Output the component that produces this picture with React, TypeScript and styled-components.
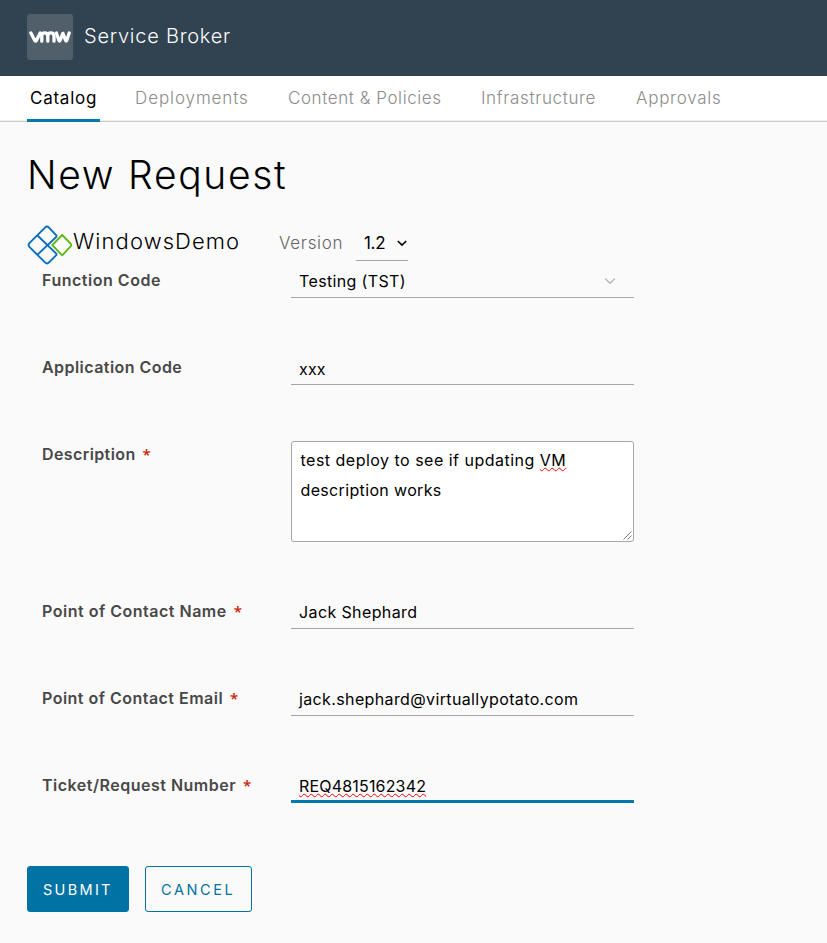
import React from 'react';
import styled, { createGlobalStyle, css } from 'styled-components';

const GlobalStyle = createGlobalStyle`
  *, *::before, *::after { box-sizing: border-box; }
  body {
    margin: 0;
    background: #fafafa;
    color: #000;
    font-family: Inter, "Liberation Sans", sans-serif;
    font-size: 16px;
  }
`;

const Page = styled.div`
  display: flex;
  flex-direction: column;
  min-height: 943px;
  white-space: nowrap;
`;

const Header = styled.header`
  display: flex;
  align-items: center;
  gap: 11px;
  height: 76px;
  padding: 0 27px 2px;
  background: #314351;
`;

const LogoBox = styled.div`
  display: flex;
  align-items: center;
  justify-content: center;
  width: 46px;
  height: 46px;
  border-radius: 3px;
  background: #515f6b;
`;

const ProductName = styled.span`
  padding-bottom: 2px;
  color: #fafafa;
  font-size: 20px;
  font-weight: 300;
  line-height: 24px;
  letter-spacing: 0.75px;
`;

const Nav = styled.nav`
  display: flex;
  height: 46px;
  padding-left: 27px;
  background: #fff;
  box-shadow: inset 0 -1px 0 #ccc, inset 0 -2px 0 #eee;
`;

const Tab = styled.a<{ $active?: boolean; $width: number; $track: number }>`
  width: ${(p) => p.$width}px;
  height: 46px;
  margin-right: 32px;
  padding-left: 3px;
  font-size: 17px;
  line-height: 45px;
  font-weight: ${(p) => (p.$active ? 370 : 340)};
  letter-spacing: ${(p) => p.$track}px;
  color: ${(p) => (p.$active ? '#000' : '#8c8c8c')};
  ${(p) => p.$active && css`box-shadow: inset 0 -3px 0 #0079ad;`}
`;

const Main = styled.main`
  padding: 28px 27px 0;
`;

const Title = styled.h1`
  margin: 0;
  padding-top: 1px;
  padding-bottom: 1px;
  font-size: 39px;
  font-weight: 270;
  line-height: 48px;
  letter-spacing: 1.68px;
`;

const ItemBar = styled.div`
  display: flex;
  align-items: flex-start;
  height: 67px;
  padding-top: 23px;
`;

const ItemIcon = styled.svg`
  flex: none;
  width: 46px;
  height: 42px;
  margin-top: 1px;
`;

const ItemName = styled.span`
  width: 206px;
  font-size: 22px;
  font-weight: 300;
  line-height: 37px;
  letter-spacing: 1.08px;
`;

const VersionLabel = styled.span`
  width: 77px;
  color: #666;
  font-size: 17px;
  font-weight: 330;
  line-height: 40px;
  letter-spacing: 0.7px;
`;

const VersionSelect = styled.div`
  display: flex;
  align-items: center;
  justify-content: space-between;
  width: 52px;
  height: 38px;
  padding: 3px 0 0 8px;
  border-bottom: 1px solid #a6a6a6;
  font-size: 17px;
  letter-spacing: -0.3px;
`;

const Form = styled.form`
  padding-left: 15px;
`;

const Field = styled.div<{ $tall?: boolean }>`
  display: grid;
  grid-template-columns: 249px 343px;
  align-items: start;
  height: ${(p) => (p.$tall ? 157 : 87)}px;
`;

const Label = styled.label<{ $track: number }>`
  display: flex;
  gap: 7px;
  color: #484848;
  font-weight: 600;
  line-height: 27px;
  letter-spacing: ${(p) => p.$track}px;
`;

const Required = styled.span`
  height: 27px;
  color: #c92100;
  font-family: "Open Sans", sans-serif;
  font-weight: 600;
  font-size: 15px;
  line-height: 26px;
`;

const Control = styled.div<{ $track: number; $focused?: boolean; $low?: boolean }>`
  display: flex;
  justify-content: space-between;
  align-items: center;
  height: 31px;
  padding: 0 17px 0 8px;
  border-bottom: ${(p) => (p.$focused ? '3px solid #0079ad' : '1px solid #a6a6a6')};
  line-height: ${(p) => (p.$low ? 30 : 28)}px;
  padding-bottom: ${(p) => (p.$low || p.$focused ? 0 : 2)}px;
  letter-spacing: ${(p) => p.$track}px;
`;

const TextArea = styled.div`
  display: flex;
  justify-content: space-between;
  align-items: flex-end;
  height: 101px;
  padding: 0 1px 1px 8px;
  border: 1px solid #a6a6a6;
  border-radius: 3px;
  background: #fff;
`;

const TextLines = styled.div`
  align-self: flex-start;
  padding-top: 3px;
`;

const TextLine = styled.div<{ $track: number }>`
  height: 30px;
  padding-left: 0.5px;
  line-height: 31px;
  letter-spacing: ${(p) => p.$track}px;
`;

const Misspelled = styled.span`
  text-decoration: underline wavy #f00 1.3px;
  text-decoration-skip-ink: none;
  text-underline-offset: 0.5px;
`;

const Actions = styled.div`
  display: flex;
  gap: 16px;
  padding-top: 7px;
`;

const Button = styled.button<{ $primary?: boolean }>`
  width: ${(p) => (p.$primary ? 102 : 107)}px;
  height: 46px;
  padding: 1px 0 0 15px;
  border: 1px solid #0072a3;
  border-radius: 3px;
  background: ${(p) => (p.$primary ? '#0072a3' : 'transparent')};
  color: ${(p) => (p.$primary ? '#fff' : '#0072a3')};
  font-family: inherit;
  font-size: 14.5px;
  letter-spacing: ${(p) => (p.$primary ? 2.3 : 2.6)}px;
  text-align: left;
`;

const VmwLogo = () => (
  <svg width="42" height="14" viewBox="0 0 42 14" fill="none" stroke="#fff" strokeWidth="3.3" strokeLinecap="round" strokeLinejoin="round">
    <path d="M1.9 3 L5.8 10.6 Q6.6 11.8 7.4 10.6 L11.2 3" />
    <path d="M12.8 11.2 V6 Q12.8 2.8 15.6 2.8 Q18.8 2.8 18.8 6 V11.2 M18.8 6 Q18.8 2.8 21.8 2.8 Q25 2.8 25 6 V11.2" />
    <path d="M27.4 3 L30 10.6 Q30.5 11.6 31 10.6 L33.9 3.4 L36.7 10.6 Q37.2 11.6 37.7 10.6 L40.2 3" />
  </svg>
);

const BlueprintIcon = () => (
  <ItemIcon viewBox="0 0 46 42" fill="none" strokeWidth="1.9" strokeLinejoin="round">
    <g stroke="#0a6ebd">
      <path d="M30 12.2 L22 3.6 Q20 1.4 18 3.6 L2.4 19.1 Q0.8 21 2.4 22.9 L18 38.4 Q20 40.6 22 38.4 L30 30.4" />
      <path d="M10.5 11.5 L30 30.4" />
      <path d="M30 12.2 L10.5 30.6" />
    </g>
    <path stroke="#60b515" d="M35.2 11 L43.6 19.6 Q44.8 21 43.6 22.4 L35.2 31.3 L25.3 21.2 Z" />
  </ItemIcon>
);

const Chevron = ({ color, wide }: { color: string; wide?: boolean }) => (
  <svg width={wide ? 14 : 12} height="8" viewBox={wide ? '0 0 14 8' : '0 0 12 8'} fill="none" stroke={color} strokeWidth={wide ? 1.3 : 1.6}>
    <path d={wide ? 'M2.3 1.6 L7 6.3 L11.7 1.6' : 'M1.8 2 L6 6.1 L10.2 2'} />
  </svg>
);

const ResizeGrip = () => (
  <svg width="9" height="9" viewBox="0 0 9 9" stroke="#555" strokeWidth="0.8">
    <path d="M0.5 8.5 L8.5 0.5 M4.5 8.5 L8.5 4.5" />
  </svg>
);

const tabs = [
  { label: 'Catalog', width: 73, track: 0.75, active: true },
  { label: 'Deployments', width: 121, track: 0.9 },
  { label: 'Content & Policies', width: 161, track: 0.58 },
  { label: 'Infrastructure', width: 123, track: 0.65 },
  { label: 'Approvals', width: 92, track: 0.73 },
];

export default function App() {
  return (
    <Page>
      <GlobalStyle />
      <Header>
        <LogoBox><VmwLogo /></LogoBox>
        <ProductName>Service Broker</ProductName>
      </Header>
      <Nav>
        {tabs.map((t) => (
          <Tab key={t.label} $active={t.active} $width={t.width} $track={t.track}>{t.label}</Tab>
        ))}
      </Nav>
      <Main>
        <Title>New Request</Title>
        <ItemBar>
          <BlueprintIcon />
          <ItemName>WindowsDemo</ItemName>
          <VersionLabel>Version</VersionLabel>
          <VersionSelect>1.2<Chevron color="#000" /></VersionSelect>
        </ItemBar>
        <Form>
          <Field>
            <Label $track={0.52}>Function Code</Label>
            <Control $track={0.36}>Testing (TST)<Chevron color="#b0b0b0" wide /></Control>
          </Field>
          <Field>
            <Label $track={0.45}>Application Code</Label>
            <Control $track={0.2} $low>xxx</Control>
          </Field>
          <Field $tall>
            <Label $track={0.4}>Description<Required>*</Required></Label>
            <TextArea>
              <TextLines>
                <TextLine $track={0.49}>test deploy to see if updating <Misspelled>VM</Misspelled></TextLine>
                <TextLine $track={0.35}>description works</TextLine>
              </TextLines>
              <ResizeGrip />
            </TextArea>
          </Field>
          <Field>
            <Label $track={0.51}>Point of Contact Name<Required>*</Required></Label>
            <Control $track={0.38}>Jack Shephard</Control>
          </Field>
          <Field>
            <Label $track={0.48}>Point of Contact Email<Required>*</Required></Label>
            <Control $track={0.37}>jack.shephard@virtuallypotato.com</Control>
          </Field>
          <Field>
            <Label $track={0.5}>Ticket/Request Number<Required>*</Required></Label>
            <Control $track={0.18} $focused><Misspelled>REQ4815162342</Misspelled></Control>
          </Field>
        </Form>
        <Actions>
          <Button $primary>SUBMIT</Button>
          <Button>CANCEL</Button>
        </Actions>
      </Main>
    </Page>
  );
}
